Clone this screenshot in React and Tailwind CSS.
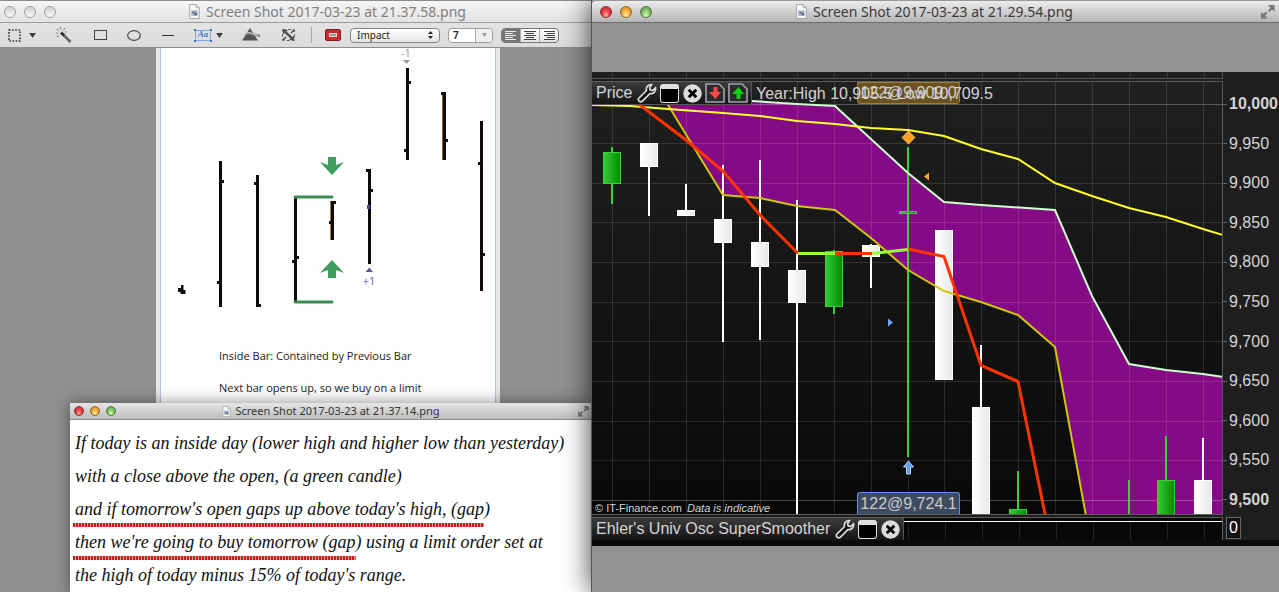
import React from "react";

const GRID_X = [612, 649, 686, 723, 760, 797, 834, 871, 908, 944, 981, 1018, 1055, 1092, 1129, 1166, 1203];
const GRID_Y = [104, 143, 183, 222, 262, 302, 341, 381, 421, 460, 500];
const PRICES = ["10,000", "9,950", "9,900", "9,850", "9,800", "9,750", "9,700", "9,650", "9,600", "9,550", "9,500"];

// x = left edge of the body, top/bottom = body, hi/lo = wick
const CANDLES = [
  { x: 603, top: 152, bottom: 184, hi: 147, lo: 204, up: true },
  { x: 640, top: 143, bottom: 167, hi: 143, lo: 216 },
  { x: 677, top: 210, bottom: 216, hi: 184, lo: 216 },
  { x: 714, top: 219, bottom: 243, hi: 165, lo: 342 },
  { x: 751, top: 242, bottom: 267, hi: 160, lo: 340 },
  { x: 788, top: 270, bottom: 303, hi: 200, lo: 520 },
  { x: 825, top: 251, bottom: 307, hi: 250, lo: 314, up: true },
  { x: 862, top: 245, bottom: 257, hi: 244, lo: 288 },
  { x: 899, top: 211, bottom: 214, hi: 147, lo: 457, up: true },
  { x: 935, top: 230, bottom: 380, hi: 230, lo: 380 },
  { x: 972, top: 407, bottom: 520, hi: 345, lo: 520 },
  { x: 1009, top: 509, bottom: 520, hi: 471, lo: 520, up: true },
  { x: 1120, top: 518, bottom: 522, hi: 480, lo: 520, up: true },
  { x: 1157, top: 480, bottom: 520, hi: 436, lo: 520, up: true },
  { x: 1194, top: 480, bottom: 520, hi: 438, lo: 520 },
];

const UPPER = "653,94 752,101 797,104 835,106 871,139 908,173 944,202 981,205 1055,210 1092,296 1129,364 1166,370 1203,374 1223,377";
const LOWER = "653,81 668,105 723,195 760,198 797,206 835,210 871,238 908,270 944,291 981,302 1018,315 1055,347 1086,516";
const LOWER_BACK = "1086,516 1055,347 1018,315 981,302 944,291 908,270 871,238 835,210 797,206 760,198 723,195 668,105 653,81";
const AVERAGE = "592,105 630,106 668,109 723,113 760,116 797,121 835,124 871,128 908,130 944,136 981,149 1018,159 1055,183 1092,196 1129,208 1166,217 1203,229 1223,235";

const BARS = [
  { x: 220, y1: 161, y2: 307, right: [181], left: [282] },
  { x: 257, y1: 175, y2: 307, right: [305], left: [183] },
  { x: 295, y1: 198, y2: 301, right: [257], left: [261] },
  { x: 332, y1: 201, y2: 240, right: [202], left: [222], edge: "#b07a35" },
  { x: 369, y1: 169, y2: 264, right: [190], left: [170] },
  { x: 407, y1: 68, y2: 160, right: [82], left: [150] },
  { x: 444, y1: 92, y2: 160, right: [140], left: [93], edge: "#a05a30" },
  { x: 481, y1: 121, y2: 291, right: [254], left: [163] },
];

function Lights({ idle, small }) {
  const size = small ? "size-[10px]" : "size-[12px]";
  const colors = idle
    ? [
        "bg-linear-to-b from-[#d0d0d0] to-[#f8f8f8] border-[#a3a3a3]",
        "bg-linear-to-b from-[#d0d0d0] to-[#f8f8f8] border-[#a3a3a3]",
        "bg-linear-to-b from-[#d0d0d0] to-[#f8f8f8] border-[#a3a3a3]",
      ]
    : [
        "bg-[radial-gradient(ellipse_at_50%_85%,#ffb5ad,#e8444a_45%,#a8222c)] border-[#8a3035]",
        "bg-[radial-gradient(ellipse_at_50%_85%,#ffeeb0,#f3ad3d_50%,#b86f1c)] border-[#94672c]",
        "bg-[radial-gradient(ellipse_at_50%_85%,#e2ffc0,#84c566_50%,#4a8a35)] border-[#50793f]",
      ];
  return (
    <div className={small ? "flex gap-[6px] pl-1" : "flex gap-2 pl-1"}>
      {["Close", "Minimize", "Zoom"].map((name, i) => (
        <button key={name} aria-label={name} className={`${size} rounded-full border ${colors[i]}`} />
      ))}
    </div>
  );
}

function DocIcon({ small }) {
  return (
    <svg viewBox="0 0 10 14" className={small ? "h-[11px] w-[9px]" : "h-[15px] w-[11px]"}>
      <path d="M.5.5h6l3 3v10h-9z" fill="#fafafa" stroke="#9a9a9a" strokeWidth=".8" />
      <path d="M6.500.5v3h3" fill="#ddd" stroke="#9a9a9a" strokeWidth=".7" />
      <rect x="2" y="6" width="6" height="5" fill="#a9afc0" />
      <path d="M3 7.500h2v1H3zM5 8.500h2v2H5z" fill="#4d5878" />
    </svg>
  );
}

function ExpandIcon() {
  return (
    <svg viewBox="0 0 14 14" className="size-full" fill="#777">
      <path d="M7 0h6.500v6.500L11 4.500 8.500 7 7 5.500 9.500 3z" />
      <path d="M6.500 13.500H0V7l2.500 2L5 6.500 6.500 8 4 10.500z" />
    </svg>
  );
}

function Caret() {
  return (
    <svg viewBox="0 0 8 6" className="h-[5px] w-[7px]">
      <path d="M0 0h8L4 6z" fill="#3d3d3d" />
    </svg>
  );
}

function ToolButton({ label, className, children }) {
  return (
    <button aria-label={label} className={`flex h-5 items-center justify-center ${className}`}>
      {children}
    </button>
  );
}

function Lines({ d }) {
  return (
    <svg viewBox="0 0 12 11" className="h-[11px] w-[12px]">
      <path d={d} stroke="currentColor" />
    </svg>
  );
}

function Toolbar() {
  return (
    <div className="flex h-[25px] items-center border-b border-[#8d8d8d] bg-linear-to-b from-[#e3e3e3] to-[#dcdcdc] pl-2">
      <ToolButton label="Select" className="w-7 gap-2">
        <svg viewBox="0 0 13 13" className="size-[13px]">
          <rect x="1" y="1" width="11" height="11" fill="none" stroke="#333" strokeWidth="1.600" strokeDasharray="1.600 1.500" />
        </svg>
        <Caret />
      </ToolButton>
      <ToolButton label="Instant alpha" className="ml-[18px] w-5">
        <svg viewBox="0 0 18 16" className="h-4 w-[18px]">
          <path d="M6.500 6l9 9" stroke="#666" strokeWidth="2.600" />
          <path d="M6 5.500l3 3" stroke="#333" strokeWidth="2.600" />
          <path d="M1 6h3M5.500 0v3M2 2l2 2M10 1L8 3.500M2 10l2-2M10 5h2" stroke="#777" strokeWidth="1.200" strokeDasharray="1.500 1" />
        </svg>
      </ToolButton>
      <ToolButton label="Rectangle" className="ml-4 w-5">
        <svg viewBox="0 0 13 11" className="h-[11px] w-[13px]">
          <rect x=".5" y=".5" width="12" height="9" fill="none" stroke="#444" />
        </svg>
      </ToolButton>
      <ToolButton label="Ellipse" className="ml-[14px] w-5">
        <svg viewBox="0 0 14 11" className="h-[11px] w-[14px]">
          <ellipse cx="7" cy="5.500" rx="6.300" ry="4.800" fill="none" stroke="#444" strokeWidth="1.200" />
        </svg>
      </ToolButton>
      <ToolButton label="Line" className="ml-[14px] w-5">
        <span className="h-px w-3 bg-[#333]" />
      </ToolButton>
      <ToolButton label="Text" className="ml-4 w-[30px] gap-[5px]">
        <span className="relative flex h-[11px] w-4 items-center justify-center border border-[#7fa5e0] font-['Liberation_Serif',serif] text-[9px] font-bold text-[#3f74cf] italic">
          Aa
          <svg viewBox="0 0 18 13" className="absolute -inset-[2px] h-[13px] w-[18px]" fill="#3a6fd0">
            <path d="M0 0h2v2H0zM16 0h2v2h-2zM0 11h2v2H0zM16 11h2v2h-2z" />
          </svg>
        </span>
        <Caret />
      </ToolButton>
      <ToolButton label="Adjust color" className="ml-4 w-5">
        <svg viewBox="0 0 20 14" className="h-[14px] w-5">
          <path d="M10 0l8 12.500H2z" fill="#555" />
          <path d="M0 7.500l9-3.500 11 2.500v3L9 6z" fill="#888" />
          <path d="M1 7.500L9 4.500l9 3" stroke="#eee" fill="none" strokeWidth=".7" />
        </svg>
      </ToolButton>
      <ToolButton label="Adjust size" className="ml-[18px] w-5">
        <svg viewBox="0 0 13 12" className="h-[12px] w-[13px]">
          <path d="M.5.5h12v11H.5z" fill="none" stroke="#6a6a6a" strokeDasharray="3.500 2" />
          <path d="M1 1h5L4.500 2.500l6 5.500L12 6.500V11H7l1.500-1.500-6-5.500L1 5.500z" fill="#505050" />
          <path d="M12 1L9 4M1 11l3-3" stroke="#505050" strokeWidth="1.600" />
        </svg>
      </ToolButton>
      <span className="ml-[13px] h-4 w-px bg-[#a8a8a8]" />
      <ToolButton label="Border color" className="ml-3 w-[18px]">
        <span className="flex h-[12px] w-[16px] items-center justify-center rounded-[2px] border border-[#7b2020] bg-[#cc2a2a]">
          <span className="h-1 w-2 border border-[#f0d5d5] bg-[#999]" />
        </span>
      </ToolButton>
      <label className="relative ml-2 flex">
        <select
          aria-label="Font"
          className="h-[15px] w-[90px] appearance-none rounded-[4px] border border-[#858585] bg-linear-to-b from-white to-[#e6e6e6] pl-[6px] font-['Noto_Sans',sans-serif] text-[10px] leading-[13px] text-[#222]"
        >
          <option>Impact</option>
        </select>
        <svg viewBox="0 0 5 8" className="absolute top-[3px] right-[7px] h-2 w-[5px]" fill="#222">
          <path d="M2.500 0L5 3H0zM2.500 8L0 5h5z" />
        </svg>
      </label>
      <div className="ml-2 flex h-[15px] w-[45px] overflow-hidden rounded-[4px] border border-[#9d9d9d] bg-white">
        <input
          aria-label="Font size"
          defaultValue="7"
          className="w-[26px] pl-1 font-['Noto_Sans',sans-serif] text-[10px] leading-[13px] font-semibold text-[#222]"
        />
        <button aria-label="Font sizes" className="flex flex-1 items-center justify-center border-l border-[#aaa] bg-[#efefef]">
          <svg viewBox="0 0 6 5" className="h-[4px] w-[5px]" fill="#999">
            <path d="M0 0h6L3 5z" />
          </svg>
        </button>
      </div>
      <div className="ml-2 flex h-[15px] w-[58px] overflow-hidden rounded-[4px] border border-[#777] bg-linear-to-b from-white to-[#e3e3e3] text-[#444]">
        <button aria-label="Align left" className="flex flex-1 items-center justify-center bg-[#757575] text-[#eee]">
          <Lines d="M0 1.500h11M0 3.500h8M0 5.500h11M0 7.500h8M0 9.500h11" />
        </button>
        <button aria-label="Align center" className="flex flex-1 items-center justify-center border-x border-[#aaa]">
          <Lines d="M0 1.500h12M2 3.500h8M0 5.500h12M2 7.500h8M0 9.500h12" />
        </button>
        <button aria-label="Align right" className="flex flex-1 items-center justify-center">
          <Lines d="M1 1.500h11M4 3.500h8M1 5.500h11M4 7.500h8M1 9.500h11" />
        </button>
      </div>
    </div>
  );
}

function BarDiagram() {
  return (
    <svg viewBox="161 48 334 294" className="block h-[294px] w-full">
      <g className="font-['Open_Sans',sans-serif] text-[11px]" textAnchor="middle">
        <text x="406" y="57" fill="#999">-1</text>
        <text x="369" y="285" fill="#5d5d92">+1</text>
      </g>
      <path d="M403 60h7l-3.500 4z" fill="#999" />
      <path d="M365.500 272h7.500l-3.700-4.500z" fill="#5d5d92" />
      {BARS.map((b) => (
        <g key={b.x}>
          {b.edge && <rect x={b.x - 2} y={b.y1} width="4" height={b.y2 - b.y1} fill={b.edge} />}
          <rect x={b.x - 1} y={b.y1} width="3" height={b.y2 - b.y1} fill="#0b0b0b" />
          {b.right.map((y) => <rect key={y} x={b.x + 1} y={y - 1} width="3" height="3" fill="#111" />)}
          {b.left.map((y) => <rect key={y} x={b.x - 3} y={y - 1} width="3" height="3" fill="#111" />)}
        </g>
      ))}
      <path d="M181 285h2.500v5h2v4h-5v-2h-2.500v-4h3z" fill="#111" />
      <rect x="367" y="205" width="3" height="4" fill="#514b93" />
      <path d="M295 197h37M295 302h37" stroke="#3d8b52" strokeWidth="3" strokeLinecap="round" />
      <path d="M328 157h8v8l8-3-12 13-12-13 8 3z" fill="#3f9d5c" />
      <path d="M328 278h8v-8l8 3-12-13-12 13 8-3z" fill="#3f9d5c" />
    </svg>
  );
}

function DiagramWindow() {
  return (
    <section className="flex w-[591px] shrink-0 flex-col bg-[#909090]">
      <header className="flex h-[23px] items-center border-t border-b border-t-[#8b8b93] border-b-[#9b9b9b] bg-linear-to-b from-[#f6f6f6] to-[#e2e2e2]">
        <Lights idle />
        <h1 className="flex flex-1 items-center justify-center gap-[6px] pl-2 font-['Noto_Sans',sans-serif] text-[14px] leading-5 text-[#808080]">
          <DocIcon />
          Screen Shot 2017-03-23 at 21.37.58.png
        </h1>
      </header>
      <Toolbar />
      <div className="ml-[156px] w-[344px] flex-1 border-x-4 border-[#e4e7ea] bg-[#fdfdfd]">
        <div className="h-full border-x border-[#b4c6dc]">
          <BarDiagram />
          <div className="pl-[58px] font-['Open_Sans',sans-serif] text-[11px] leading-4 text-[#222]">
            <p className="pt-[6px]">Inside Bar: Contained by Previous Bar</p>
            <p className="pt-4">Next bar opens up, so we buy on a limit</p>
          </div>
        </div>
      </div>
    </section>
  );
}

function Marked({ children }) {
  return (
    <span className="-ml-[2px] bg-[repeating-linear-gradient(90deg,#c41f1f_0_2px,#e59a9a_2px_3px)] bg-[length:100%_4px] bg-bottom bg-no-repeat pb-2 pl-[2px]">
      {children}
    </span>
  );
}

function NotesWindow() {
  return (
    <section className="absolute top-[403px] left-[70px] z-10 flex h-[189px] w-[521px] flex-col bg-white shadow-[0_0_14px_rgba(0,0,0,0.45)]">
      <header className="flex h-[17px] items-center border-b border-[#8a8a8a] bg-linear-to-b from-[#e6e6e6] to-[#bdbdbd]">
        <Lights small />
        <h2 className="-ml-8 flex flex-1 items-center justify-center gap-1 font-['Noto_Sans',sans-serif] text-[11px] leading-4 text-[#333]">
          <DocIcon small />
          Screen Shot 2017-03-23 at 21.37.14.png
        </h2>
        <button aria-label="Full screen" className="mr-[2px] size-[11px]">
          <ExpandIcon />
        </button>
      </header>
      <div className="pt-[7px] pl-[5px] font-['Liberation_Serif',serif] text-[18px] leading-[33px] whitespace-nowrap text-[#111] italic">
        <p>If today is an inside day (lower high and higher low than yesterday)</p>
        <p>with a close above the open, (a green candle)</p>
        <p><Marked>and if tomorrow's open gaps up above today's high, (gap</Marked>)</p>
        <p><Marked>then we're going to buy tomorrow (gap</Marked>) using a limit order set at</p>
        <p>the high of today minus 15% of today's range.</p>
      </div>
    </section>
  );
}

function PanelButtons({ arrows }) {
  return (
    <div className="flex items-center gap-[3px]">
      <button aria-label="Settings">
        <svg viewBox="0 0 20 20" className="size-5">
          <path
            d="M1.500 15.500l8-8c-.8-3 1.300-6 5-6l-2 3.300.8 2.200 2.200.6L18.500 5c.6 3.600-2.300 6.300-5.700 5.600L5 18.500c-2 1-4.300-1-3.500-3z"
            fill="#111"
            stroke="#ddd"
            strokeWidth="1.700"
          />
        </svg>
      </button>
      <button aria-label="Collapse" className="flex h-[19px] w-[19px] rounded-[3px] border-x border-t-[5px] border-b border-[#e0e0e0] bg-black" />
      <button aria-label="Remove" className="ml-px">
        <svg viewBox="0 0 20 20" className="size-[19px]">
          <circle cx="10" cy="10" r="9.700" fill="#dcdcdc" />
          <path d="M6 6l8 8M14 6l-8 8" stroke="#000" strokeWidth="3" />
        </svg>
      </button>
      {arrows && (
        <>
          <button aria-label="Move down">
            <svg viewBox="0 0 20 20" className="size-5">
              <path d="M1 1h13l5 5v13H1z" fill="#2b2b2e" stroke="#a0a4ac" strokeWidth="1.600" />
              <path d="M8.500 4h4v5H16l-5.500 7L4 9h4.500z" fill="#ff4a4a" />
            </svg>
          </button>
          <button aria-label="Move up">
            <svg viewBox="0 0 20 20" className="size-5">
              <path d="M1 1h13l5 5v13H1z" fill="#2b2b2e" stroke="#a0a4ac" strokeWidth="1.600" />
              <path d="M8.500 16h4v-5H16l-5.500-7L4 11h4.500z" fill="#12d012" />
            </svg>
          </button>
        </>
      )}
    </div>
  );
}

function PriceChart() {
  return (
    <svg viewBox="592 82 630 432" preserveAspectRatio="none" className="block h-[432px] w-full">
      <defs>
        <linearGradient id="upBody">
          <stop offset="0" stopColor="#35cc35" />
          <stop offset="1" stopColor="#008a00" />
        </linearGradient>
        <linearGradient id="downBody">
          <stop offset="0" stopColor="#fff" />
          <stop offset="1" stopColor="#e8e8e8" />
        </linearGradient>
      </defs>
      <polygon points={`${UPPER} 1223,516 ${LOWER_BACK}`} fill="#850a85" />
      <g fill="#fff" fillOpacity=".12">
        {GRID_X.map((x) => <rect key={x} x={x} y="81" width="1" height="434" />)}
        {GRID_Y.map((y) => (
          <rect key={y} x="592" y={y} width="630" height="1" fillOpacity={y === 104 || y === 500 ? 0.25 : 0.12} />
        ))}
      </g>
      {CANDLES.map((c) => (
        <g key={c.x}>
          <rect x={c.x + 8} y={c.hi} width="2" height={c.lo - c.hi} fill={c.up ? "#3ccf3c" : "#fff"} />
          <rect
            x={c.x + 0.5}
            y={c.top + 0.5}
            width="17"
            height={c.bottom - c.top - 1}
            fill={c.up ? "url(#upBody)" : "url(#downBody)"}
            stroke={c.up ? "#3ccf3c" : "#fff"}
          />
        </g>
      ))}
      <g fill="none" strokeWidth="2">
        <polyline points={LOWER} stroke="#cfc60a" />
        <polyline points={UPPER} stroke="#ccffcc" />
        <polyline points={AVERAGE} stroke="#ffff2e" />
      </g>
      <g fill="none" strokeWidth="3">
        <polyline points="615,84 640,105 686,140 723,171 760,215 798,253.500" stroke="#ff3300" />
        <path d="M835 253.500h37M908 249l36 7.500 37 109 37 16 27.500 135" stroke="#ff3300" />
        <path d="M798 253.500h37M872 253.500l36-4" stroke="#99ff33" />
      </g>
      <path d="M908.500 131l6.500 6.500-6.500 6.500-6.500-6.500z" fill="#ffa01e" stroke="#ffdf9e" strokeWidth=".7" />
      <path d="M929 172.500v8l-5-4z" fill="#ffa838" />
      <path d="M888 318.500v8l5-4z" fill="#6fa8ff" />
      <path d="M908.500 461l5 6h-3v7h-4v-7h-3z" fill="#5e9bff" stroke="#b5d5ff" />
    </svg>
  );
}

function Tag({ className, children }) {
  return (
    <span className={`absolute left-[265px] flex h-[22px] w-[103px] items-center justify-center border text-[#ccc] ${className}`}>
      {children}
    </span>
  );
}

function ChartWindow() {
  return (
    <section className="relative z-20 flex min-w-0 flex-1 flex-col border-l border-[#555] bg-[#929292] shadow-[0_0_26px_rgba(0,0,0,0.75)]">
      <header className="flex h-[23px] items-center rounded-tl-[4px] border-t border-b border-t-[#999] border-b-[#6c6c6c] bg-linear-to-b from-[#ececec] to-[#b5b5b5] pl-1">
        <Lights />
        <h2 className="-ml-11 flex flex-1 items-center justify-center gap-[6px] font-['Noto_Sans',sans-serif] text-[14px] leading-5 text-[#3a3a3a]">
          <DocIcon />
          Screen Shot 2017-03-23 at 21.29.54.png
        </h2>
        <button aria-label="Full screen" className="mr-1 size-[14px]">
          <ExpandIcon />
        </button>
      </header>

      <div className="mt-[49px] bg-[#1e1e1e] font-['Liberation_Sans',Arial,sans-serif] text-[16px] leading-5 text-[#d4d4d4]">
        <div className="mr-[56px] h-[7px] border-r border-b border-[#555] bg-[repeating-linear-gradient(90deg,transparent_0_20px,#383838_20px_21px,transparent_21px_37px)]" />
        <div className="flex pt-[2px]">
          <div className="relative flex-1 border-y border-r border-[#5c5c5c] bg-linear-to-b from-[#202020] to-[#090909]">
            <PriceChart />
            <Tag className="top-0 rounded-b-[3px] border-[#a47c33] bg-[#6a5220]">122@9,909.0</Tag>
            <div className="absolute top-0 left-0 flex h-[23px] items-center whitespace-nowrap">
              <div className="flex h-full w-[160px] items-center gap-[5px] border-r border-b border-[#555] bg-linear-to-b from-[#3c3c3c] to-[#151515] pl-1">
                Price
                <PanelButtons arrows />
              </div>
              <span className="pl-1">Year:High 10,905.5 Low 10,709.5</span>
            </div>
            <p className="absolute bottom-0 left-[3px] text-[11px] leading-3 whitespace-nowrap">
              © IT-Finance.com <i className="pl-[2px]">Data is indicative</i>
            </p>
            <Tag className="bottom-0 rounded-t-[3px] border-b-0 border-[#5d8ff0] bg-[#3d4a60]">122@9,724.1</Tag>
          </div>
          <ol className="flex w-[56px] flex-col justify-between pt-[13px] pb-[5px]">
            {PRICES.map((p, i) => (
              <li key={p} className={i === 0 || i === 10 ? "flex items-center gap-[2px] font-bold" : "flex items-center gap-[2px]"}>
                <span className="h-px w-1 shrink-0 bg-[#666]" />
                {p}
              </li>
            ))}
          </ol>
        </div>
        <div className="flex pt-[2px]">
          <div className="flex h-[23px] flex-1 border-t border-r border-[#5c5c5c] bg-[#080808]">
            <div className="flex items-center gap-[5px] border-r border-[#555] bg-linear-to-b from-[#3c3c3c] to-[#151515] pr-[3px] pl-1 whitespace-nowrap">
              Ehler's Univ Osc SuperSmoother
              <PanelButtons />
            </div>
            <div className="mt-[3px] flex-1 border-t border-white bg-[repeating-linear-gradient(90deg,transparent_0_4px,#222_4px_5px,transparent_5px_37px)]" />
          </div>
          <div className="w-[56px]">
            <span className="ml-[3px] inline-block border border-[#666] bg-[#111] px-[2px] text-white">0</span>
          </div>
        </div>
        <div className="h-[6px] bg-[#0b0b0b]" />
      </div>
    </section>
  );
}

export default function App() {
  return (
    <main className="relative flex min-h-screen overflow-hidden bg-[#929292]">
      <DiagramWindow />
      <NotesWindow />
      <ChartWindow />
    </main>
  );
}
